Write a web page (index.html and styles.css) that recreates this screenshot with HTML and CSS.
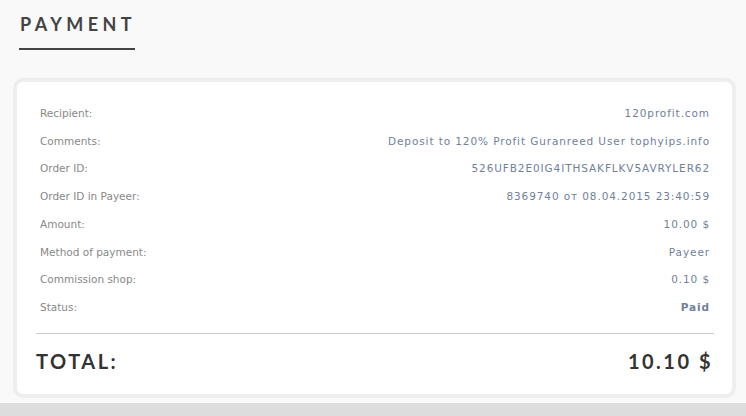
FILE: index.html
```html
<!DOCTYPE html>
<html lang="en">
<head>
    <meta charset="UTF-8">
    <meta name="viewport" content="width=device-width, initial-scale=1.0">
    <title>Payment</title>
    <link rel="stylesheet" href="styles.css">
</head>
<body>
    <header class="page-head">
        <h1>PAYMENT</h1>
    </header>
    <main class="card">
        <div class="rows">
            <div class="row"><span class="label">Recipient:</span><span class="value">120profit.com</span></div>
            <div class="row"><span class="label">Comments:</span><span class="value">Deposit to 120% Profit Guranreed User tophyips.info</span></div>
            <div class="row"><span class="label">Order ID:</span><span class="value">526UFB2E0IG4ITHSAKFLKV5AVRYLER62</span></div>
            <div class="row"><span class="label">Order ID in Payeer:</span><span class="value">8369740 от 08.04.2015 23:40:59</span></div>
            <div class="row"><span class="label">Amount:</span><span class="value">10.00 $</span></div>
            <div class="row"><span class="label">Method of payment:</span><span class="value">Payeer</span></div>
            <div class="row"><span class="label">Commission shop:</span><span class="value">0.10 $</span></div>
            <div class="row"><span class="label">Status:</span><span class="value paid">Paid</span></div>
        </div>
        <div class="total">
            <span>TOTAL:</span>
            <span>10.10 $</span>
        </div>
    </main>
    <footer class="bottom-bar"></footer>
</body>
</html>
```

FILE: styles.css
```css
/* Reset */
* {
    box-sizing: border-box;
    margin: 0;
    padding: 0;
}

body {
    font-family: 'DejaVu Sans', 'Liberation Sans', sans-serif;
    background-color: #f9f9f9;
    color: #333;
}

.page-head {
    padding: 14px 0 0 19px;
    height: 78px;
}

.page-head h1 {
    display: inline-block;
    width: 116px;
    font-family: 'Lato', sans-serif;
    font-size: 18px;
    font-weight: 700;
    letter-spacing: 4.4px;
    line-height: 20px;
    color: #444;
    padding: 0 0 14px 1px;
    border-bottom: 2px solid #444;
}

.card {
    margin: 0 10px 0 13px;
    background-color: #fff;
    border: 4px solid #eeeeee;
    border-radius: 10px;
    padding: 18px 18px 6px 19px;
}

.rows {
    padding: 0 4px 11px;
    border-bottom: 1px solid #ccc;
}

.row {
    display: flex;
    justify-content: space-between;
    font-size: 10.5px;
    line-height: 27.7px;
}

.label {
    color: #888;
}

.value {
    color: #6f819a;
    letter-spacing: 0.9px;
}

.paid {
    font-weight: bold;
}

.total {
    display: flex;
    justify-content: space-between;
    align-items: center;
    height: 54px;
    padding: 0 1px 0 0;
    font-family: 'Lato', sans-serif;
    font-size: 20px;
    font-weight: 700;
    letter-spacing: 2.5px;
    color: #333;
}

.bottom-bar {
    margin-top: 5px;
    height: 14px;
    background-color: #dddddd;
}
```
